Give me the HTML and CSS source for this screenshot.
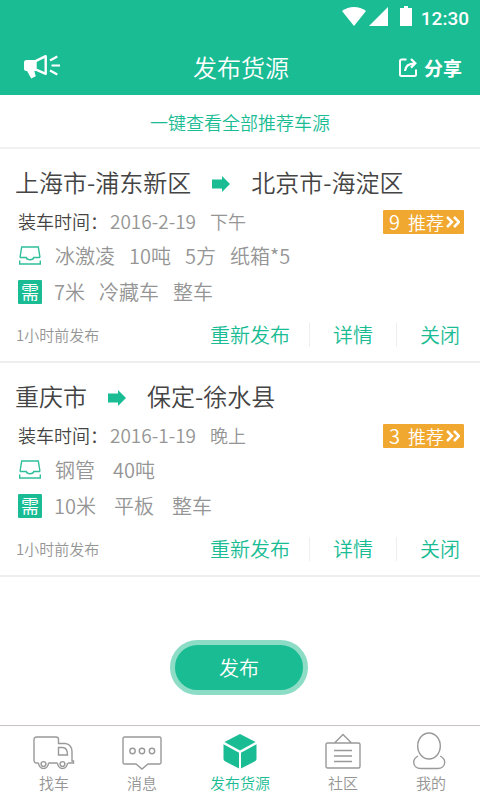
FILE: index.html
```html
<!DOCTYPE html>
<html lang="zh-CN">
<head>
<meta charset="utf-8">
<meta name="viewport" content="width=device-width, initial-scale=1">
<title>发布货源</title>
<link rel="stylesheet" href="styles.css">
</head>
<body>
<svg class="defs" width="0" height="0" aria-hidden="true">
  <symbol id="arrow" viewBox="0 0 18 16"><path d="M0 3.500h10V0l8 8-8 8v-3.500H0z" fill="#1abc94"/></symbol>
  <symbol id="tray" viewBox="0 0 22 19"><path d="M1 11.500L2.700 1h16.600L21 11.500M1 11.500h6.200c.5 2 1.800 2.200 3.800 2.200s3.300-.2 3.800-2.200H21M.7 14.500V18h20.600v-3.500" fill="none" stroke="#2fbf9b" stroke-width="1.400"/></symbol>
  <symbol id="chevrons" viewBox="0 0 14 12"><path d="M1 1l5 5-5 5M8 1l5 5-5 5" fill="none" stroke="#fff" stroke-width="2.500"/></symbol>
</svg>
<header class="header">
  <div class="status">
    <svg width="24" height="19" viewBox="0 0 24 19"><path d="M0 4C7-1.300 17-1.300 24 4L12 19z" fill="#fff"/></svg>
    <svg width="19" height="19" viewBox="0 0 19 19"><path d="M19 0v19H0z" fill="#fff"/></svg>
    <svg class="battery" width="12" height="20" viewBox="0 0 12 20"><path d="M0 2h4V0h4v2h4v18H0z" fill="#fff"/></svg>
    <span>12:30</span>
  </div>
  <div class="titlebar">
    <button class="notice" aria-label="公告">
      <svg width="36" height="25" viewBox="0 0 36 25"><path d="M2.500 6H12v11H2.500A2.500 2.500 0 0 1 0 14.500v-6A2.500 2.500 0 0 1 2.500 6z" fill="#fff"/><path d="M2 15l8 1 1.800 6.300L7.200 24.500z" fill="#fff"/><path d="M11.500 7.200L21.700 2.200v17.600L11.500 15.300z" fill="none" stroke="#fff" stroke-width="2.400" stroke-linejoin="round"/><path d="M26 6.500L33.300 2.500M27.500 11.500H36M26 16.500l7.300 4" stroke="#fff" stroke-width="2.200"/></svg>
    </button>
    <h1>发布货源</h1>
    <button class="share">
      <svg width="18" height="19" viewBox="0 0 18 19"><path d="M7.500 1.500H2.500a1.500 1.500 0 0 0-1.500 1.500v13.500A1.500 1.500 0 0 0 2.500 18h13a1.500 1.500 0 0 0 1.500-1.500V11.500" fill="none" stroke="#fff" stroke-width="2"/><path d="M6 13C6.300 8 9 5.500 16 5.300M12 1l4.300 4.300L12 9.600" fill="none" stroke="#fff" stroke-width="2.200"/></svg>
      分享
    </button>
  </div>
</header>
<main class="main">
  <a class="all" href="#">一键查看全部推荐车源</a>
  <article class="card">
    <h2 class="route">上海市-浦东新区<svg width="18" height="16"><use href="#arrow"/></svg>北京市-海淀区</h2>
    <div class="time"><span class="label">装车时间：</span><span class="date">2016-2-19</span><span>下午</span>
      <button class="tag"><span class="count">9</span>推荐<svg width="14" height="12"><use href="#chevrons"/></svg></button>
    </div>
    <div class="goods"><svg class="tray" width="22" height="19"><use href="#tray"/></svg><span>冰激凌</span><span>10吨</span><span>5方</span><span>纸箱*5</span></div>
    <div class="need"><span class="badge">需</span><span>7米</span><span>冷藏车</span><span>整车</span></div>
    <div class="foot"><span class="ago">1小时前发布</span><button class="first">重新发布</button><button>详情</button><button>关闭</button></div>
  </article>
  <article class="card">
    <h2 class="route">重庆市<svg width="18" height="16"><use href="#arrow"/></svg>保定-徐水县</h2>
    <div class="time"><span class="label">装车时间：</span><span class="date">2016-1-19</span><span>晚上</span>
      <button class="tag"><span class="count">3</span>推荐<svg width="14" height="12"><use href="#chevrons"/></svg></button>
    </div>
    <div class="goods loose"><svg class="tray" width="22" height="19"><use href="#tray"/></svg><span>钢管</span><span>40吨</span></div>
    <div class="need loose"><span class="badge">需</span><span>10米</span><span>平板</span><span>整车</span></div>
    <div class="foot"><span class="ago">1小时前发布</span><button class="first">重新发布</button><button>详情</button><button>关闭</button></div>
  </article>
  <button class="publish">发布</button>
</main>
<nav class="nav">
  <a href="#"><svg width="42" height="36" viewBox="0 0 42 36"><g fill="none" stroke="#999" stroke-width="1.400"><path d="M5.500 30H3.500A2.500 2.500 0 0 1 1 27.500V6.500A2.500 2.500 0 0 1 3.500 4H23a2.500 2.500 0 0 1 2.500 2.500V10.500H32c4 0 7 3.500 7 8V28h1.500v2H35M15.500 30h9"/><path d="M25.500 14.500h4c3 0 5 2.500 5 7.500h-9z"/><path d="M5.500 30a5 5.500 0 0 0 10 0M24.500 30a5 5.500 0 0 0 10 0"/><circle cx="10.500" cy="31" r="2.400"/><circle cx="29.500" cy="31" r="2.400"/></g></svg>找车</a>
  <a href="#"><svg width="40" height="36" viewBox="0 0 40 36"><g fill="none" stroke="#999" stroke-width="1.400"><path d="M2.500 4h35A1.500 1.500 0 0 1 39 5.500v24a1.500 1.500 0 0 1-1.500 1.500H26l-6 5-6-5H2.500A1.500 1.500 0 0 1 1 29.500v-24A1.500 1.500 0 0 1 2.500 4z"/><circle cx="10.500" cy="18" r="2.700"/><circle cx="20" cy="18" r="2.700"/><circle cx="30" cy="18" r="2.700"/></g></svg>消息</a>
  <a class="active" href="#"><svg width="34" height="36" viewBox="0 0 34 36"><path d="M17 1l15.500 8L17 17.500 1.500 9zM.5 11.300L16 19.700V35.500L2 28.300q-1.500-.8-1.500-2.300zM33.500 11.300L18 19.700V35.500l14-7.200q1.500-.8 1.500-2.300z" fill="#1abc94"/></svg>发布货源</a>
  <a href="#"><svg width="36" height="36" viewBox="0 0 36 36"><g fill="none" stroke="#999" stroke-width="1.400"><path d="M2.500 10h31A1.500 1.500 0 0 1 35 11.500v22a1.500 1.500 0 0 1-1.500 1.500h-31A1.500 1.500 0 0 1 1 33.500v-22A1.500 1.500 0 0 1 2.500 10zM9.500 10L18 1.500l8.500 8.500M9 17.500h18M9 23h18M9 28.500h18"/></g></svg>社区</a>
  <a href="#"><svg width="34" height="38" viewBox="0 0 34 38"><g fill="none" stroke="#999" stroke-width="1.400"><ellipse cx="15" cy="15" rx="11.300" ry="13"/><path d="M4 25C1.500 26.500-.3 28-.3 31c0 4 3 6.500 7 6.500h17c4 0 7-2.500 7-6.500 0-3-2-4.500-4.500-6"/></g></svg>我的</a>
</nav>
</body>
</html>
```
FILE: styles.css
```css
* { box-sizing: border-box; }
body {
  margin: 0;
  min-height: 100vh;
  display: flex;
  flex-direction: column;
  background: #fff;
  color: #959595;
  font-family: "Noto Sans CJK SC", sans-serif;
  font-weight: 350;
}
button {
  margin: 0;
  padding: 0;
  border: 0;
  background: none;
  color: inherit;
  font: inherit;
  cursor: pointer;
}
a { color: inherit; text-decoration: none; }
h1, h2 { margin: 0; font-weight: 350; }
svg { display: block; flex: none; overflow: visible; }
.defs { position: absolute; }

.header { background: #1abc94; color: #fff; }
.status {
  height: 38px;
  padding: 0 11px;
  display: flex;
  align-items: center;
  justify-content: flex-end;
  gap: 3px;
  font: 500 19px/38px Roboto, sans-serif;
}
.status svg { margin-bottom: 6px; }
.status .battery { margin-left: 9px; margin-right: 6px; }
.titlebar {
  height: 57px;
  padding: 0 18px 0 24px;
  display: grid;
  grid-template-columns: 1fr auto 1fr;
  align-items: center;
}
.titlebar h1 { padding-right: 4px; font-size: 24px; line-height: 36px; }
.notice { justify-self: start; }
.share {
  justify-self: end;
  padding-top: 2px;
  display: flex;
  align-items: center;
  gap: 7px;
  font-size: 19px;
  line-height: 28px;
  font-weight: 700;
}

.main { flex: 1; display: flex; flex-direction: column; }
.all {
  padding-top: 2px;
  border-bottom: 2px solid #f1f1f1;
  color: #1abc94;
  font-size: 18px;
  line-height: 50px;
  text-align: center;
}
.card {
  padding: 14px 16px 5px 15px;
  border-bottom: 2px solid #eee;
}
.card > * { display: flex; align-items: center; }
.route {
  height: 38px;
  padding-bottom: 2px;
  gap: 21px;
  color: #444;
  font-size: 24px;
}
.route svg { margin-top: 6px; }
.time { height: 39px; font-size: 18px; padding-left: 3px; }
.time .label { margin-right: 2px; color: #444; }
.time .date { margin-right: 14px; font-size: 19px; }
.tag {
  height: 24px;
  margin: 3px 0 0 auto;
  padding: 0 4px 0 6px;
  display: flex;
  align-items: center;
  border-radius: 1px;
  background: #f0a830;
  color: #fff;
  font-size: 18px;
  line-height: 24px;
}
.tag .count { margin-right: 8px; font-size: 20px; }
.tag svg { margin-left: 2px; }
.goods, .need { gap: 14px; font-size: 20px; }
.goods { height: 30px; padding-left: 4px; }
.need { height: 43px; padding-left: 3px; }
.need .badge { margin-right: -2px; }
.loose { gap: 18px; }
.loose .tray { margin-right: -4px; }
.need.loose .badge { margin-right: -6px; }
.badge {
  width: 24px;
  height: 24px;
  border-radius: 1px;
  background: #1abc94;
  color: #fff;
  font-size: 18px;
  line-height: 22px;
  font-weight: 400;
  text-align: center;
}
.foot { height: 43px; font-size: 20px; color: #1abc94; }
.foot .ago { margin-right: auto; padding-left: 1px; color: #959595; font-size: 15px; }
.foot button {
  height: 24px;
  padding: 0 23px;
  border-right: 1px solid #eee;
  line-height: 24px;
}
.foot .first { padding: 0 19px 0 0; }
.foot button:last-child { border: 0; padding-right: 4px; }

.publish {
  align-self: center;
  margin: 63px 2px 30px 0;
  width: 138px;
  height: 55px;
  border: 5px solid #8cdcc6;
  border-radius: 28px;
  background: #1abc94;
  color: #fff;
  font-size: 20px;
}

.nav {
  padding: 5px 10px;
  border-top: 1px solid #c8c2c2;
  display: grid;
  grid-template-columns: 44fr 44fr 54fr 49fr 39fr;
  font-size: 15px;
  line-height: 24px;
}
.nav a {
  display: flex;
  flex-direction: column;
  align-items: center;
  justify-content: flex-end;
}
.nav svg { margin-bottom: 2px; }
.nav .active { color: #1abc94; }
```
